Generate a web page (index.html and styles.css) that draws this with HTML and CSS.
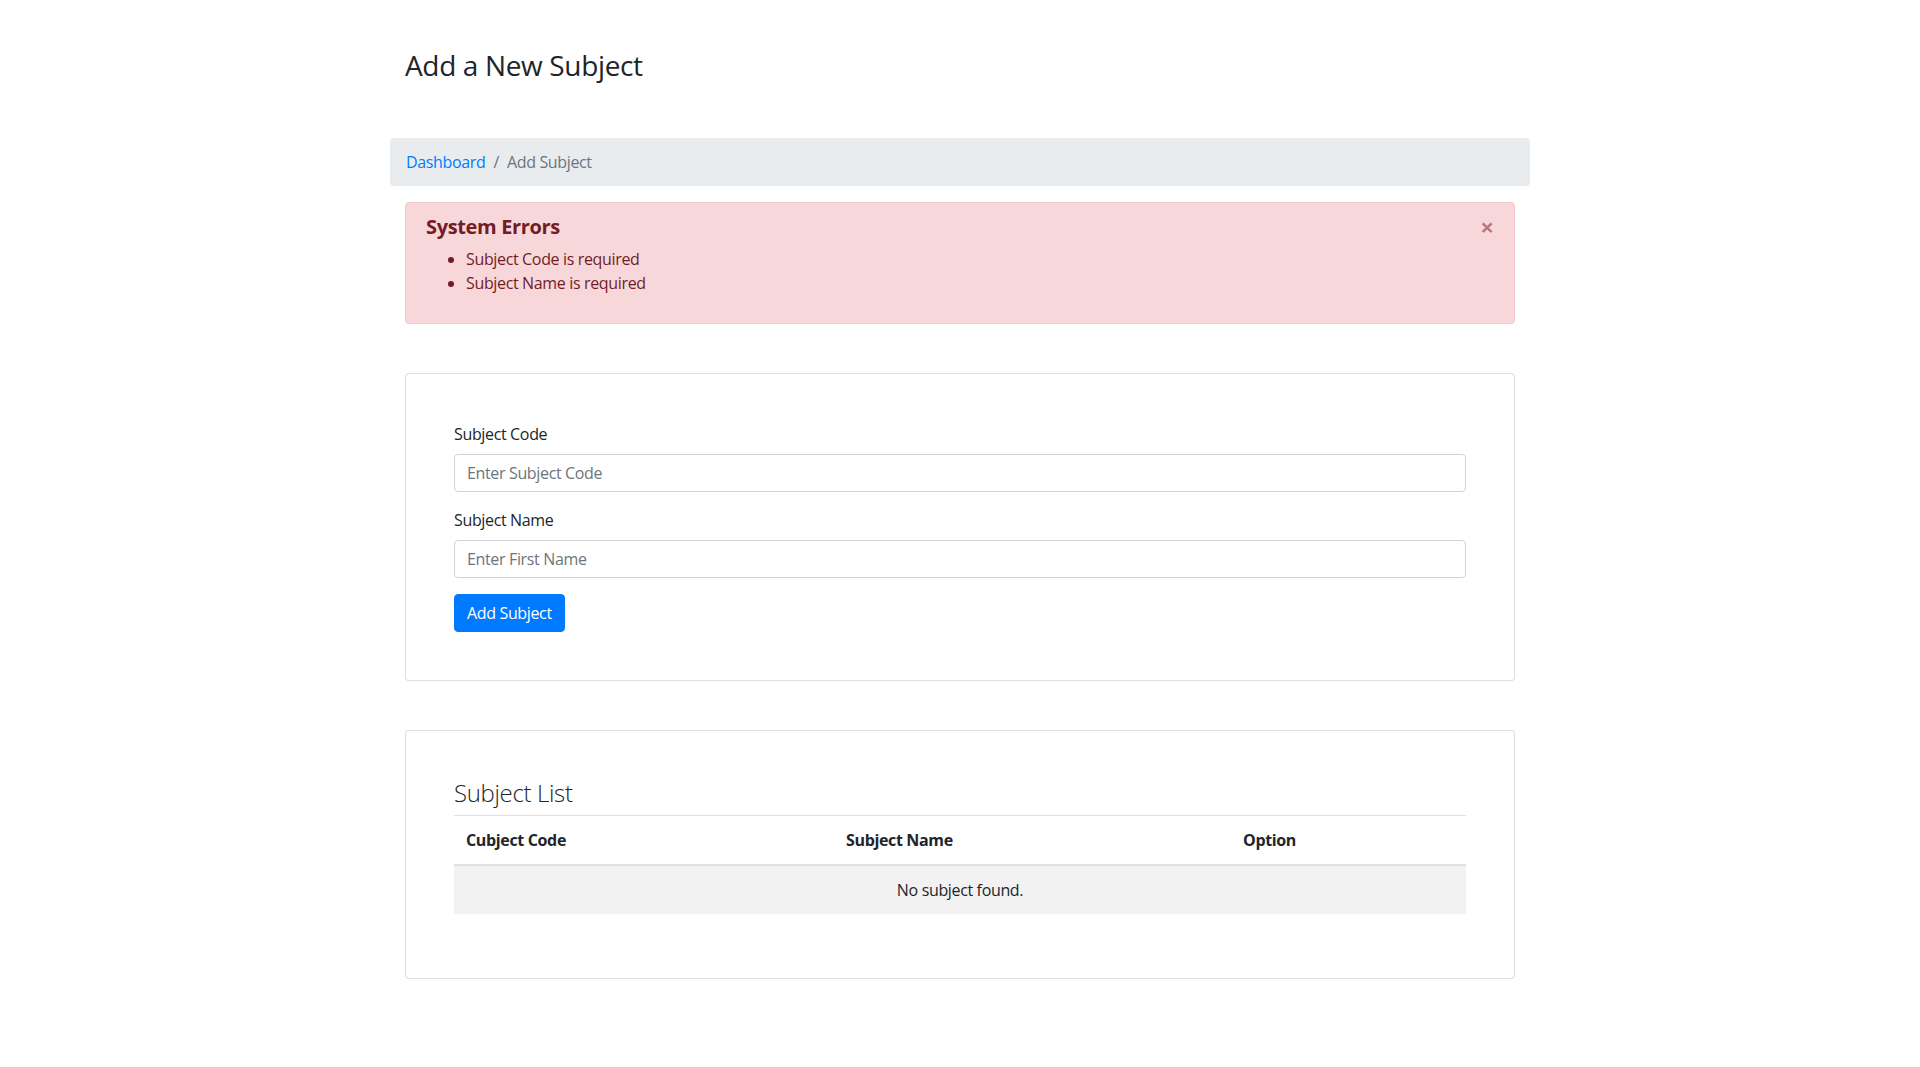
FILE: index.html
```html
<!DOCTYPE html>
<html lang="en">
<head>
<meta charset="utf-8">
<title>Add a New Subject</title>
<link rel="stylesheet" href="styles.css">
</head>
<body>
<div class="container">
  <h3 class="page-title">Add a New Subject</h3>

  <nav class="breadcrumb">
    <a class="crumb-link" href="#">Dashboard</a>
    <span class="crumb-sep">/</span>
    <span class="crumb-active">Add Subject</span>
  </nav>

  <div class="alert">
    <h5 class="alert-heading">System Errors</h5>
    <ul class="alert-list">
      <li>Subject Code is required</li>
      <li>Subject Name is required</li>
    </ul>
    <button class="close" type="button">&times;</button>
  </div>

  <div class="card">
    <div class="card-body">
      <div class="form-group">
        <label class="form-label">Subject Code</label>
        <input class="form-control" type="text" placeholder="Enter Subject Code">
      </div>
      <div class="form-group">
        <label class="form-label">Subject Name</label>
        <input class="form-control" type="text" placeholder="Enter First Name">
      </div>
      <button class="btn-primary" type="button">Add Subject</button>
    </div>
  </div>

  <div class="card">
    <div class="card-body">
      <h4 class="list-title">Subject List</h4>
      <table class="table">
        <thead>
          <tr>
            <th class="col-code">Cubject Code</th>
            <th class="col-name">Subject Name</th>
            <th class="col-option">Option</th>
          </tr>
        </thead>
        <tbody>
          <tr>
            <td class="empty-row" colspan="3">No subject found.</td>
          </tr>
        </tbody>
      </table>
    </div>
  </div>
</div>
</body>
</html>
```

FILE: styles.css
```css
* {
  box-sizing: border-box;
}

body {
  margin: 0;
  font-family: "Open Sans", "Liberation Sans", sans-serif;
  font-size: 16px;
  line-height: 1.5;
  color: #212529;
  background: #fff;
  letter-spacing: -0.35px;
}

.container {
  width: 1140px;
  margin: 0 auto;
  padding: 0 15px 60px;
}

.page-title {
  margin: 49px 0 55px;
  font-size: 28px;
  line-height: 1.2;
  font-weight: 400;
}

.breadcrumb {
  display: flex;
  margin: 0 -15px 16px;
  padding: 12px 16px;
  background: #e9ecef;
  border-radius: 4px;
}

.crumb-link {
  color: #007bff;
  text-decoration: none;
}

.crumb-sep {
  padding: 0 8px;
  color: #6c757d;
}

.crumb-active {
  color: #6c757d;
}

.alert {
  position: relative;
  padding: 12px 64px 12px 20px;
  background: #f8d7da;
  border: 1px solid #f5c6cb;
  border-radius: 4px;
  color: #721c24;
}

.alert-heading {
  margin: 0 0 8px;
  font-size: 20px;
  line-height: 1.2;
  font-weight: 700;
}

.alert-list {
  margin: 0 0 16px;
  padding-left: 40px;
}

.close {
  position: absolute;
  top: 0;
  right: 0;
  padding: 12px 20px;
  background: none;
  border: 0;
  font-family: "Open Sans", "Liberation Sans", sans-serif;
  font-size: 24px;
  font-weight: 700;
  line-height: 1;
  color: inherit;
  opacity: 0.5;
  text-shadow: 0 1px 0 #fff;
  cursor: pointer;
}

.card {
  margin-top: 49px;
  background: #fff;
  border: 1px solid rgba(0, 0, 0, 0.125);
  border-radius: 4px;
}

.card-body {
  padding: 48px;
}

.form-group {
  margin-bottom: 16px;
}

.form-label {
  display: inline-block;
  margin-bottom: 8px;
}

.form-control {
  display: block;
  width: 100%;
  height: 38px;
  padding: 6px 12px;
  font-family: inherit;
  font-size: 16px;
  line-height: 1.5;
  letter-spacing: inherit;
  color: #495057;
  background: #fff;
  border: 1px solid #ced4da;
  border-radius: 4px;
}

.form-control::placeholder {
  color: #6c757d;
}

.btn-primary {
  display: inline-block;
  padding: 6px 12px;
  font-family: inherit;
  font-size: 16px;
  line-height: 1.5;
  letter-spacing: inherit;
  color: #fff;
  background: #007bff;
  border: 1px solid #007bff;
  border-radius: 4px;
  cursor: pointer;
}

.list-title {
  margin: 0 0 8px;
  font-size: 24px;
  line-height: 1.2;
  font-weight: 300;
}

.table {
  width: 100%;
  margin-bottom: 16px;
  border-collapse: collapse;
}

.table th {
  padding: 12px;
  text-align: left;
  font-weight: 700;
  border-top: 1px solid #dee2e6;
  border-bottom: 2px solid #dee2e6;
}

.col-code {
  width: 380px;
}

.col-name {
  width: 397px;
}

.table td {
  padding: 12px;
  border-top: 1px solid #dee2e6;
}

.empty-row {
  text-align: center;
  background: #f2f2f2;
}
```
